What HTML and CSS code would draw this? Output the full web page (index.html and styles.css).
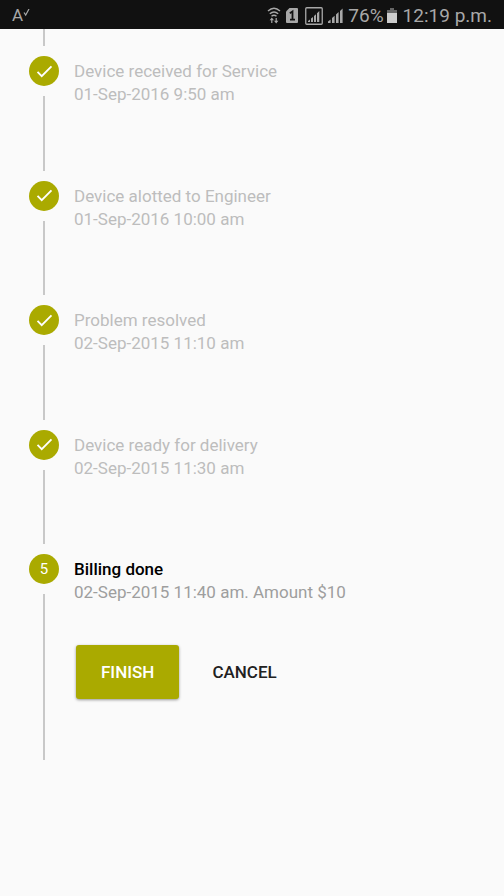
FILE: index.html
```html
<!DOCTYPE html>
<html lang="en">
<head>
<meta charset="utf-8">
<meta name="viewport" content="width=device-width, initial-scale=1">
<title>Service status</title>
<link rel="stylesheet" href="styles.css">
</head>
<body>
<header class="status-bar">
  <div class="keyboard">A<svg width="7" height="9" viewBox="0 0 7 9"><path d="M1 3.500l1.700 2.500L6 0" fill="none" stroke="currentColor" stroke-width="1.2"/></svg></div>
  <div class="indicators">
    <svg width="14" height="17" viewBox="0 0 14 17" fill="none" stroke="currentColor" stroke-width="1.4">
      <path d="M1 4Q7-1.500 13 4M2.800 6.800Q7 3 11.200 6.800M4.500 9.300Q7 7 9.500 9.300"/>
      <path d="M4.800 16v-4M9.200 11v4" stroke-width="1.2"/><path d="M2.600 13.200L4.800 10.500 7 13.200zM7 13.800l2.200 2.700 2.200-2.700z" fill="currentColor" stroke="none"/>
    </svg>
    <svg class="sim" width="12" height="15" viewBox="0 0 12 15">
      <path d="M3.500 0H11q1 0 1 1v13q0 1-1 1H1q-1 0-1-1V3.500z" fill="currentColor"/>
      <path d="M3.800 5.200L6.500 3.500V12M4 11.700h5" fill="none" stroke="#111" stroke-width="1.8"/>
    </svg>
    <svg class="boxed" width="18" height="18" viewBox="0 0 18 18">
      <rect x=".75" y=".75" width="16.5" height="16.5" rx="1" fill="none" stroke="currentColor" stroke-width="1.3"/>
      <path d="M3 15v-1l2-1.500V15zM6 15v-3.500l2-1.500v5zM9 15V9l2-1.700V15zM12 15V6.200l2.300-2.200v11z" fill="currentColor"/>
    </svg>
    <svg class="signal" width="15" height="15" viewBox="0 0 15 15"><path d="M0 15v-1.500l2.600-2V15zM4 15v-5l2.600-2.200V15zM8 15V6.500l2.600-2.500v11zM12 15V3l2.600-2.500V15z" fill="currentColor"/></svg>
    <span class="battery-text">76%</span>
    <svg class="battery" width="10" height="15" viewBox="0 0 10 15"><path d="M3 0h4v2h3v3H0V2h3z" fill="#666"/><path d="M0 5h10v10H0z" fill="#ccc"/></svg>
    <time>12:19 p.m.</time>
  </div>
</header>
<main>
  <div class="lead"></div>
  <ol class="completed">
    <li class="step">
      <div class="rail"><span class="badge"><svg width="17" height="13" viewBox="0 0 18 14"><path d="M1.500 7.500L6 12 16.500 1.500"/></svg></span></div>
      <div class="details"><h2>Device received for Service</h2><p>01-Sep-2016 9:50 am</p></div>
    </li>
    <li class="step">
      <div class="rail"><span class="badge"><svg width="17" height="13" viewBox="0 0 18 14"><path d="M1.500 7.500L6 12 16.500 1.500"/></svg></span></div>
      <div class="details"><h2>Device alotted to Engineer</h2><p>01-Sep-2016 10:00 am</p></div>
    </li>
    <li class="step">
      <div class="rail"><span class="badge"><svg width="17" height="13" viewBox="0 0 18 14"><path d="M1.500 7.500L6 12 16.500 1.500"/></svg></span></div>
      <div class="details"><h2>Problem resolved</h2><p>02-Sep-2015 11:10 am</p></div>
    </li>
    <li class="step">
      <div class="rail"><span class="badge"><svg width="17" height="13" viewBox="0 0 18 14"><path d="M1.500 7.500L6 12 16.500 1.500"/></svg></span></div>
      <div class="details"><h2>Device ready for delivery</h2><p>02-Sep-2015 11:30 am</p></div>
    </li>
  </ol>
  <section class="step current">
    <div class="rail"><span class="badge">5</span></div>
    <div class="details">
      <h2>Billing done</h2><p>02-Sep-2015 11:40 am. Amount $10</p>
      <div class="actions"><button class="finish" type="button">FINISH</button><button class="cancel" type="button">CANCEL</button></div>
    </div>
  </section>
</main>
</body>
</html>
```
FILE: styles.css
```css
* { box-sizing: border-box; }
body {
  margin: 0;
  min-height: 100vh;
  background: #fafafa;
  color: #bdbdbd;
  font: 17px/23px Roboto, sans-serif;
}
.status-bar {
  display: flex;
  align-items: center;
  justify-content: space-between;
  height: 29px;
  padding: 2px 12px 0;
  background: #111;
  color: #a8a8a8;
  font-size: 19px;
}
.keyboard { display: flex; font-size: 17px; }
.keyboard svg { margin-top: 5px; }
.indicators { display: flex; align-items: center; }
.sim { margin-left: 5px; }
.boxed { margin-left: 7px; }
.signal { margin-left: 5px; }
.battery-text { margin-left: 5px; }
.battery { margin: 0 6px 0 3px; }

main { padding: 0 29px; }
.lead {
  width: 2px;
  height: 17px;
  margin: 0 0 10px 14px;
  background: #c8c8c8;
}
.completed {
  display: flex;
  flex-direction: column;
  min-height: 498px;
  margin: 0;
  padding: 0;
  list-style: none;
}
.step { display: flex; flex: 1; gap: 15px; }
.rail {
  display: flex;
  flex-direction: column;
  align-items: center;
  width: 30px;
}
.rail::after {
  content: "";
  flex: 1;
  width: 2px;
  margin: 10px 0;
  background: #c8c8c8;
}
.badge {
  display: flex;
  align-items: center;
  justify-content: center;
  width: 30px;
  height: 30px;
  border-radius: 50%;
  background: #aa0;
  color: #fff;
  font-size: 15px;
}
.badge path { fill: none; stroke: #fff; stroke-width: 2; }
.details { flex: 1; padding-top: 4px; }
h2, p { margin: 0; font-size: 17px; font-weight: 400; }
.current h2 { color: #000; font-weight: 500; }
.current p { color: #9e9e9e; }
.actions {
  display: flex;
  gap: 8px;
  padding: 41px 0 71px 2px;
}
button {
  height: 54px;
  padding: 0 25px;
  border: 0;
  border-radius: 3px;
  background: none;
  color: #212121;
  font: 500 17px Roboto, sans-serif;
}
.finish {
  background: #aa0;
  color: #fff;
  box-shadow: 0 1px 3px rgba(0, 0, 0, .4);
}
```
